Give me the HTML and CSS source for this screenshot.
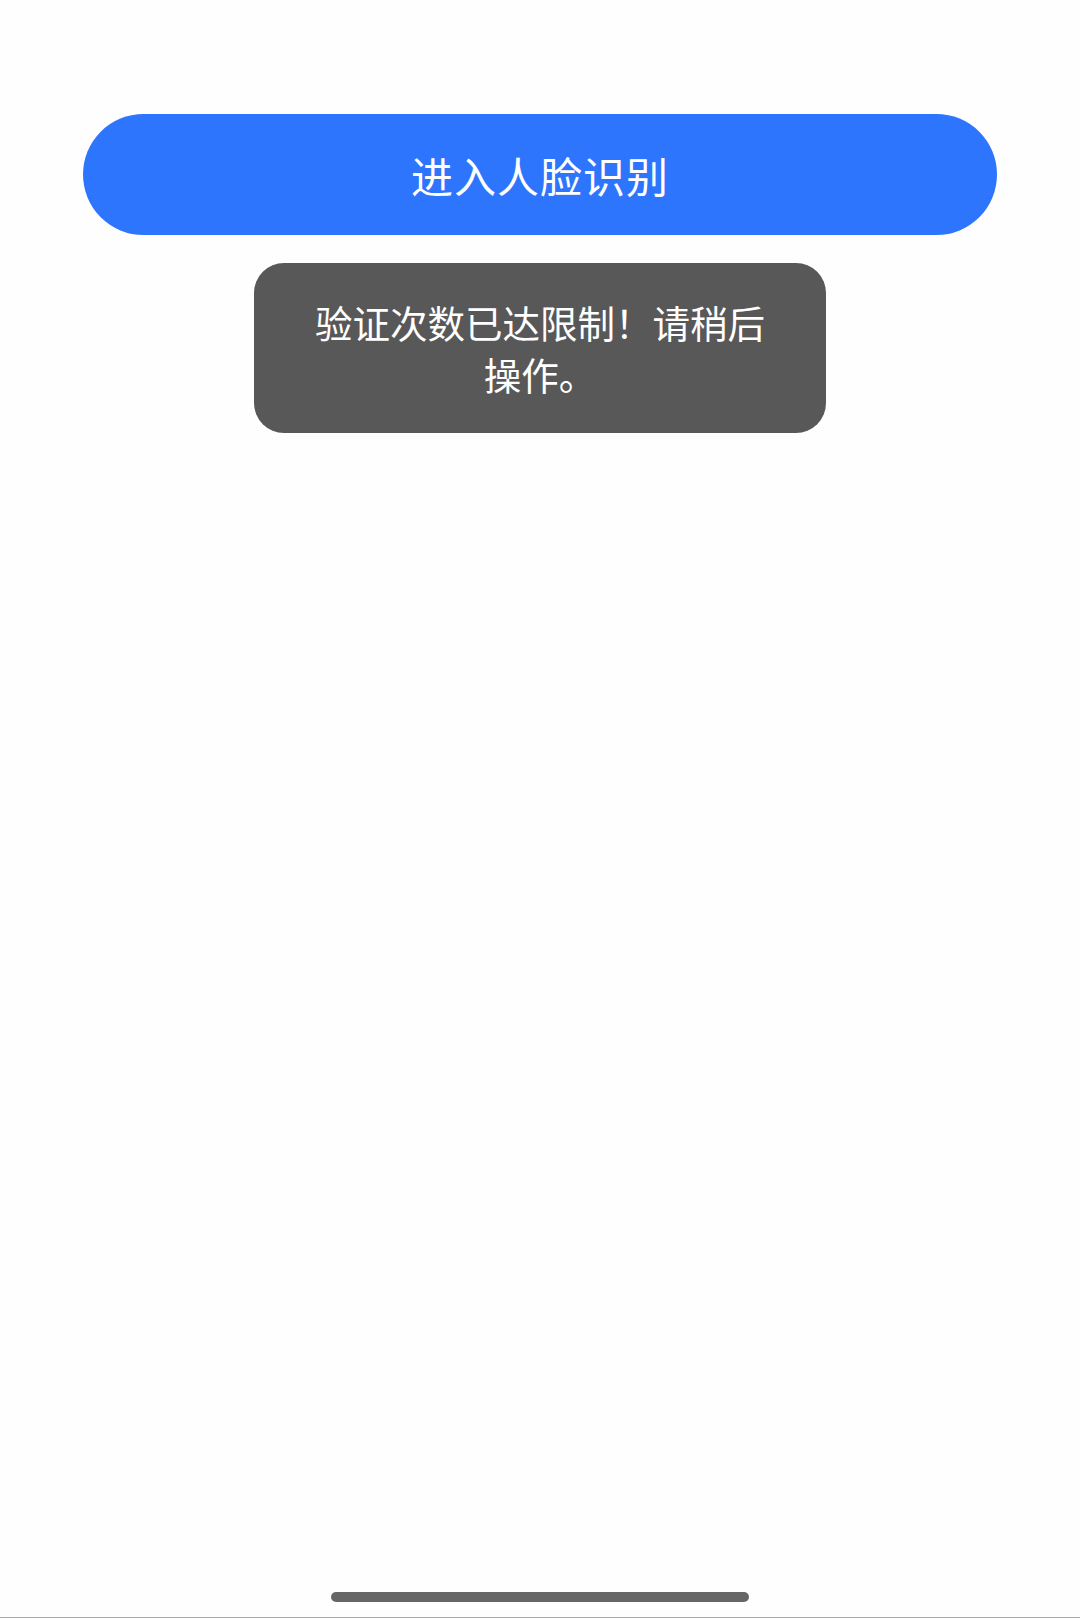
FILE: index.html
```html
<!DOCTYPE html>
<html lang="zh-CN">
<head>
<meta charset="utf-8">
<title>人脸识别</title>
<link rel="stylesheet" href="styles.css">
</head>
<body>
<div class="page">
  <button class="primary-btn">进入人脸识别</button>
  <div class="toast">验证次数已达限制！请稍后操作。</div>
  <div class="home-indicator"></div>
</div>
</body>
</html>
```
FILE: styles.css
```css
html, body {
  margin: 0;
  padding: 0;
  background: #fefefe;
}
body {
  font-family: "Noto Sans CJK SC", "Noto Sans", sans-serif;
}
.page {
  box-sizing: border-box;
  height: 1618px;
  padding-top: 114px;
  display: flex;
  flex-direction: column;
  align-items: center;
  border-bottom: 1px solid #a8a8a8;
}
.primary-btn {
  width: 914px;
  height: 121px;
  border: none;
  border-radius: 61px;
  background: #2e75fd;
  color: #ffffff;
  font-family: "Noto Sans CJK SC", "Noto Sans", sans-serif;
  font-size: 42px;
  letter-spacing: 1px;
  padding: 0;
  display: flex;
  align-items: center;
  justify-content: center;
}
.toast {
  box-sizing: border-box;
  margin-top: 28px;
  width: 572px;
  height: 170px;
  padding: 33px 52px;
  border-radius: 30px;
  background: #585858;
  color: #ffffff;
  font-size: 37.5px;
  line-height: 52px;
  text-align: center;
}
.home-indicator {
  margin-top: auto;
  margin-bottom: 15px;
  width: 418px;
  height: 10px;
  border-radius: 5px;
  background: #666666;
}
```
